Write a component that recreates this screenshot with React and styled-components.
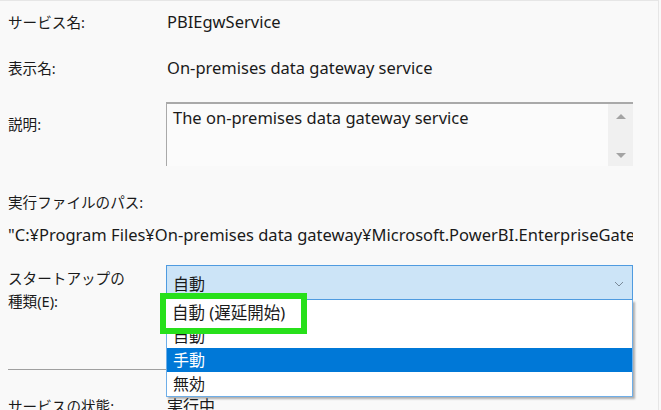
import React from "react";
import styled, { createGlobalStyle } from "styled-components";

const Global = createGlobalStyle`
  html, body { margin: 0; padding: 0; background: #f9f9f9; }
  body { font-family: "Noto Sans", "Noto Sans CJK JP", sans-serif; color: #1a1a1a; }
`;

const Frame = styled.div`
  width: 659px;
  height: 410px;
  box-sizing: border-box;
  border-top: 1px solid #e6e6e6;
  border-right: 1px solid #e6e6e6;
  background: #f9f9f9;
  overflow: hidden;
  padding: 11px 0 0 8px;
  display: flex;
  flex-direction: column;
  font-size: 16.5px;
`;

const Row = styled.div`
  display: grid;
  grid-template-columns: 158px 467px;
  align-items: ${(p) => p.$align || "center"};
  margin-top: ${(p) => p.$mt || 0}px;
  height: ${(p) => p.$h || 20}px;
  line-height: 20px;
  position: relative;
  flex-shrink: 0;
`;

const Label = styled.div`
  white-space: nowrap;
  font-size: 14.6px;
  padding-top: ${(p) => p.$pt || 0}px;
  line-height: ${(p) => p.$lh || 20}px;
`;

const Jp = styled.span`
  font-size: ${(p) => p.$size || 14.6}px;
`;

const Value = styled.div`
  white-space: nowrap;
  padding-left: 1px;
`;

const Full = styled.div`
  width: 625px;
  white-space: nowrap;
  overflow: hidden;
  line-height: 24px;
  flex-shrink: 0;
  margin-top: ${(p) => p.$mt || 0}px;
`;

const TextBox = styled.div`
  height: 64px;
  box-sizing: border-box;
  border-top: 2px solid #a9a9a9;
  border-left: 1px solid #a9a9a9;
  background: #fbfbfb;
  display: flex;
`;

const TextArea = styled.div`
  flex: 1;
  padding: 3px 0 0 6px;
  line-height: 22px;
`;

const ScrollBar = styled.div`
  width: 25px;
  background: #f0f0f0;
  display: flex;
  flex-direction: column;
  justify-content: space-between;
  align-items: center;
  padding: 10px 0 8px;
  box-sizing: border-box;
`;

const Arrow = styled.div`
  width: 0;
  height: 0;
  border-left: 5px solid transparent;
  border-right: 5px solid transparent;
  ${(p) =>
    p.$up
      ? "border-bottom: 5px solid #a3a3a3;"
      : "border-top: 5px solid #a3a3a3;"}
`;

const Combo = styled.div`
  position: relative;
  height: 35px;
  box-sizing: border-box;
  border: 1px solid #4f9be0;
  background: #cce4f7;
  display: flex;
  align-items: center;
  justify-content: space-between;
  padding: 2px 8px 0 6px;
`;

const List = styled.div`
  position: absolute;
  top: 34px;
  left: -1px;
  width: 467px;
  box-sizing: border-box;
  border: 1px solid #6eaee8;
  border-top: none;
  background: #ffffff;
  box-shadow: 2px 2px 2px rgba(0, 0, 0, 0.3);
  z-index: 2;
`;

const Item = styled.div`
  height: 24px;
  line-height: 24px;
  padding-left: 6px;
  font-size: 16px;
  background: ${(p) => (p.$sel ? "#0078d7" : "transparent")};
  color: ${(p) => (p.$sel ? "#ffffff" : "#1a1a1a")};
`;

const Highlight = styled.div`
  position: absolute;
  left: -7px;
  top: -7px;
  width: 147px;
  height: 41px;
  box-sizing: border-box;
  border: 6px solid #27e01a;
  background: #ffffff;
  font-size: 16.5px;
  line-height: 28px;
  padding-left: 6px;
  white-space: nowrap;
  z-index: 3;
`;

const Separator = styled.div`
  height: 1px;
  width: 300px;
  flex-shrink: 0;
  background: #a0a0a0;
  margin-top: ${(p) => p.$mt}px;
`;

const Chevron = () => (
  <svg width="10" height="6" viewBox="0 0 10 6">
    <path d="M1 1 L5 5 L9 1" fill="none" stroke="#7a8a99" strokeWidth="1" />
  </svg>
);

export default function App() {
  return (
    <>
      <Global />
      <Frame>
        <Row>
          <Label>サービス名:</Label>
          <Value>PBIEgwService</Value>
        </Row>
        <Row $mt={26}>
          <Label>表示名:</Label>
          <Value>On-premises data gateway service</Value>
        </Row>
        <Row $mt={24} $h={64} $align="start">
          <Label $pt={12}>説明:</Label>
          <TextBox>
            <TextArea>The on-premises data gateway service</TextArea>
            <ScrollBar>
              <Arrow $up />
              <Arrow />
            </ScrollBar>
          </TextBox>
        </Row>
        <Full $mt={24}>
          <Jp>実行ファイルのパス:</Jp>
        </Full>
        <Full $mt={9}>
          "C:¥Program Files¥On-premises data gateway¥Microsoft.PowerBI.EnterpriseGateway.exe"
        </Full>
        <Row $mt={18} $h={35} $align="start">
          <Label $pt={2} $lh={23}>
            スタートアップの
            <br />
            種類(E):
          </Label>
          <Combo>
            <Jp $size={16}>自動</Jp>
            <Chevron />
            <List>
              <Highlight>自動 (遅延開始)</Highlight>
              <Item>自動 (遅延開始)</Item>
              <Item>自動</Item>
              <Item $sel>手動</Item>
              <Item>無効</Item>
            </List>
          </Combo>
        </Row>
        <Separator $mt={69} />
        <Row $mt={26}>
          <Label>サービスの状態:</Label>
          <Value>
            <Jp $size={16}>実行中</Jp>
          </Value>
        </Row>
      </Frame>
    </>
  );
}
